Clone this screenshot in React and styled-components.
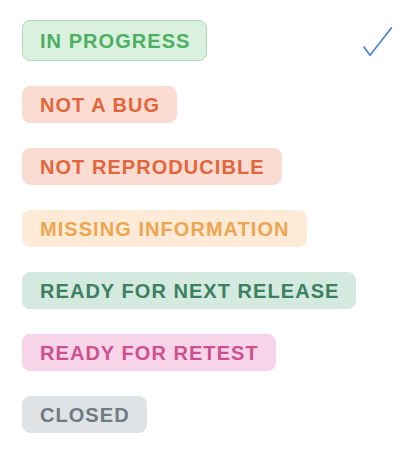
import React from "react";
import styled, { createGlobalStyle } from "styled-components";

const statuses = [
  { label: "IN PROGRESS", bg: "#d9f1de", fg: "#4daf62", border: "#acdcb7", selected: true },
  { label: "NOT A BUG", bg: "#fbdcd3", fg: "#e2663a" },
  { label: "NOT REPRODUCIBLE", bg: "#fbdcd3", fg: "#e2663a" },
  { label: "MISSING INFORMATION", bg: "#fdebd7", fg: "#eda552" },
  { label: "READY FOR NEXT RELEASE", bg: "#d4e9df", fg: "#3c8060" },
  { label: "READY FOR RETEST", bg: "#f7d4e7", fg: "#cd5190" },
  { label: "CLOSED", bg: "#dfe3e6", fg: "#6f7b83" },
];

const GlobalStyle = createGlobalStyle`
  body {
    margin: 0;
    background: #ffffff;
    font-family: "Liberation Sans", Arial, sans-serif;
  }
`;

const Menu = styled.ul`
  list-style: none;
  margin: 0;
  padding: 20px 18px 0 22px;
  width: 410px;
  height: 458px;
  box-sizing: border-box;
  display: flex;
  flex-direction: column;
  gap: 25px;
`;

const Row = styled.li`
  display: flex;
  align-items: center;
  justify-content: space-between;
`;

const Pill = styled.span`
  display: inline-flex;
  align-items: center;
  box-sizing: border-box;
  height: ${(p) => (p.$selected ? "41px" : "37px")};
  padding: 1px 16px 0 17px;
  border-radius: 8px;
  border: 1px solid ${(p) => p.$border || p.$bg};
  background: ${(p) => p.$bg};
  color: ${(p) => p.$fg};
  font-size: 20px;
  font-weight: 700;
  letter-spacing: 1.05px;
  white-space: nowrap;
`;

const Check = styled.svg`
  width: 30px;
  height: 30px;
`;

function CheckMark() {
  return (
    <Check viewBox="0 0 30 30" fill="none">
      <path
        d="M2 21 L8 29.3 L29.5 1.8"
        stroke="#4a7fd4"
        strokeWidth="1.6"
        strokeLinecap="round"
        strokeLinejoin="round"
      />
    </Check>
  );
}

export default function App() {
  return (
    <>
      <GlobalStyle />
      <Menu>
        {statuses.map((s) => (
          <Row key={s.label}>
            <Pill $bg={s.bg} $fg={s.fg} $border={s.border} $selected={s.selected}>
              {s.label}
            </Pill>
            {s.selected && <CheckMark />}
          </Row>
        ))}
      </Menu>
    </>
  );
}
